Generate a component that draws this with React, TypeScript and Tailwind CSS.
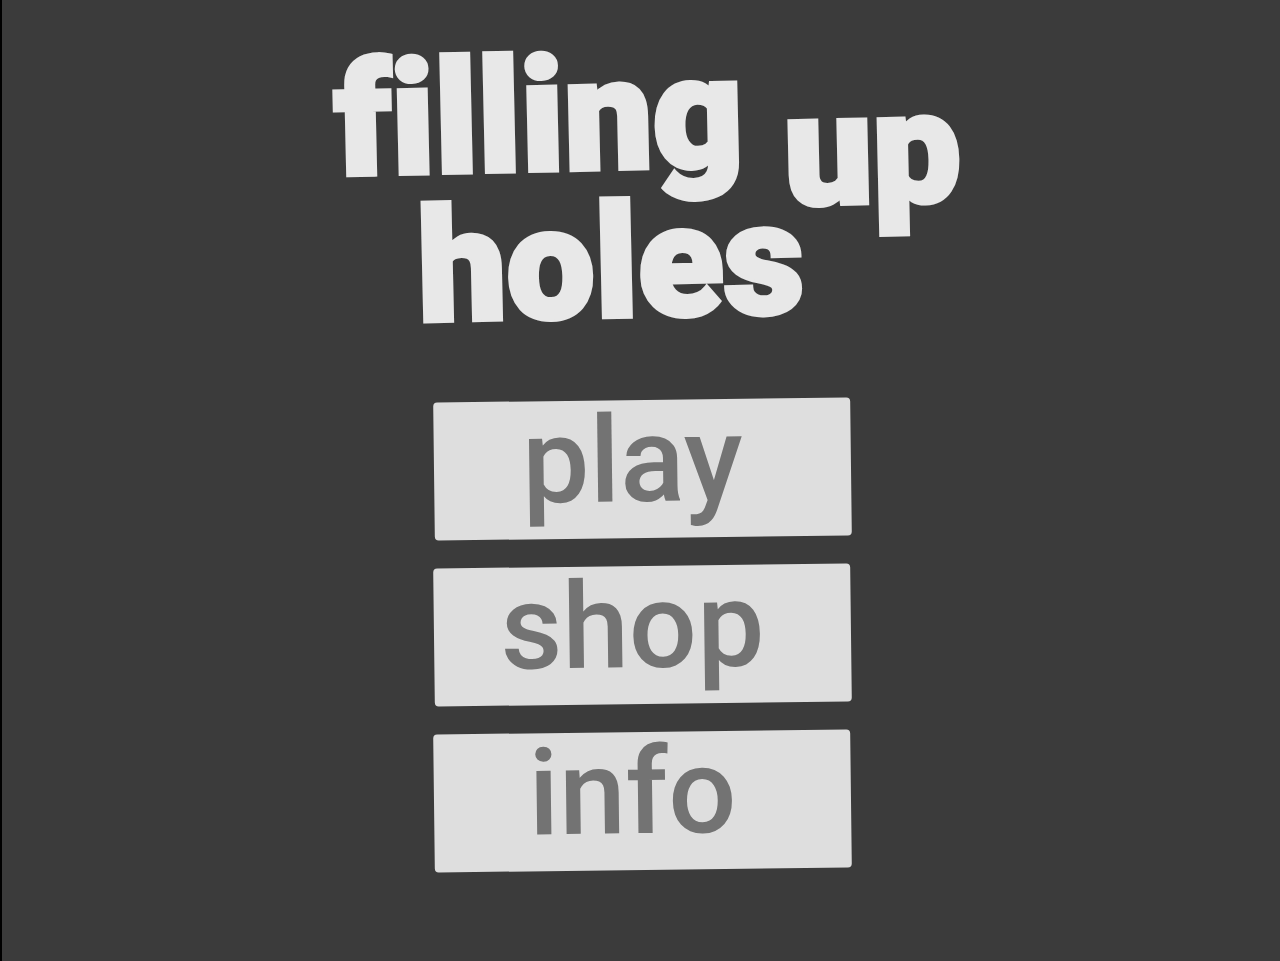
const menuItems = ['play', 'shop', 'info']

function MenuButton({ label }: { label: string }) {
  return (
    <button
      type="button"
      className="h-[138px] w-full -rotate-[0.7deg] rounded-sm bg-[#dedede] pr-5 pb-6 text-center font-['Roboto',sans-serif] text-[120px] leading-[120px] font-medium text-[#737373] hover:bg-[#e8e8e8]"
    >
      {label}
    </button>
  )
}

export default function App() {
  return (
    <main className="flex min-h-screen flex-col items-center border-l-2 border-black bg-[#3b3b3b] pt-10 pl-[3px]">
      {/* Title, thickened with a stroke in the text colour */}
      <h1 className="-rotate-[1.3deg] pl-3 font-['Roboto',sans-serif] text-[157px] leading-[148px] font-black text-[#e8e8e8] [-webkit-text-stroke:5px_#e8e8e8] [font-variant-ligatures:none] [paint-order:stroke_fill]">
        <span className="flex items-start gap-10">
          <span>filling</span>
          <span className="pt-10">up</span>
        </span>
        <span className="-mt-10 block pl-20">holes</span>
      </h1>

      {/* Menu */}
      <nav className="mt-16 flex w-[417px] flex-col gap-7">
        {menuItems.map((label) => (
          <MenuButton key={label} label={label} />
        ))}
      </nav>
    </main>
  )
}
